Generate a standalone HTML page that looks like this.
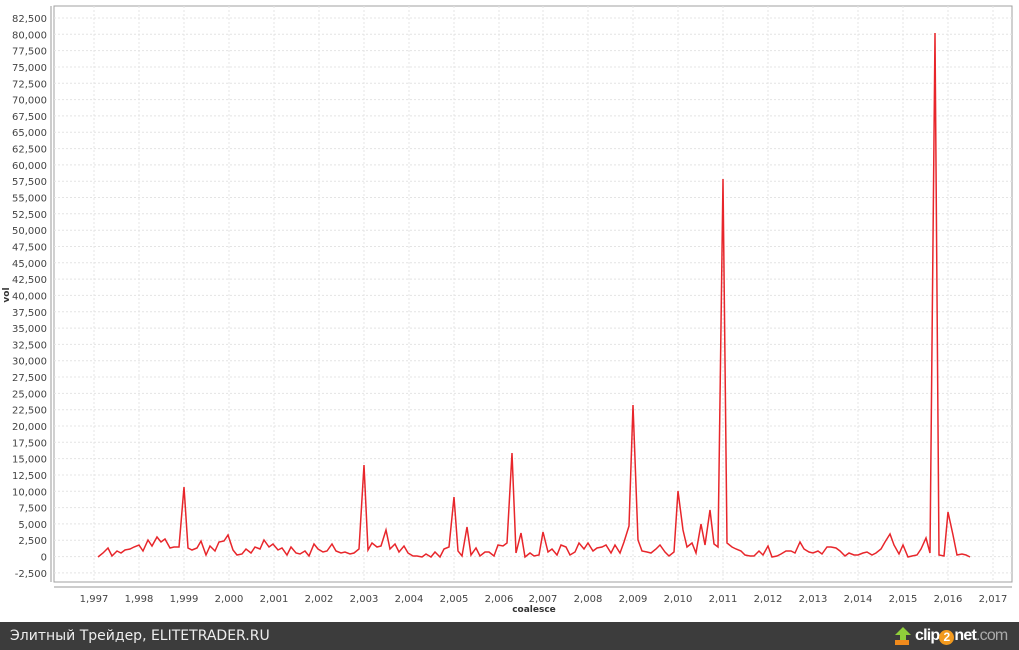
<!DOCTYPE html>
<html><head><meta charset="utf-8"><style>
html,body{margin:0;padding:0;width:1019px;height:650px;overflow:hidden;background:#fff}
svg text{font-family:"DejaVu Sans","Liberation Sans",sans-serif;font-size:10px;fill:#444}
#bar{position:absolute;left:0;top:622px;width:1019px;height:28px;background:#3c3c3c;color:#eee;font-family:"DejaVu Sans","Liberation Sans",sans-serif;font-size:14px;line-height:28px;white-space:nowrap}
</style></head><body>
<svg width="1019" height="622" style="position:absolute;left:0;top:0">
<rect x="54" y="6" width="958" height="576" fill="#fff" stroke="#a0a0a0"/>
<g stroke="#e4e4e4" stroke-dasharray="2,2">
<path d="M54 18H1012M54 34.3H1012M54 50.6H1012M54 67H1012M54 83.3H1012M54 99.6H1012M54 115.9H1012M54 132.2H1012M54 148.6H1012M54 164.9H1012M54 181.2H1012M54 197.5H1012M54 213.8H1012M54 230.2H1012M54 246.5H1012M54 262.8H1012M54 279.1H1012M54 295.4H1012M54 311.8H1012M54 328.1H1012M54 344.4H1012M54 360.7H1012M54 377H1012M54 393.4H1012M54 409.7H1012M54 426H1012M54 442.3H1012M54 458.6H1012M54 475H1012M54 491.3H1012M54 507.6H1012M54 523.9H1012M54 540.2H1012M54 556.6H1012M54 572.9H1012"/>
<path d="M94 6V582M139 6V582M184 6V582M229 6V582M274 6V582M319 6V582M364 6V582M409 6V582M454 6V582M499 6V582M543 6V582M588 6V582M633 6V582M678 6V582M723 6V582M768 6V582M813 6V582M858 6V582M903 6V582M948 6V582M993 6V582"/>
</g>
<path d="M51 6V582M54 587H1012" stroke="#999" fill="none"/>
<polyline fill="none" stroke="#e8262b" stroke-width="1.5" points="98,557 103,553 108,548 112,556 117,551 121,553 125,550 130,549 134,547 139,545 143,551 148,540 152,546 157,537 161,542 165,539 170,548 174,547 179,547 184,487 188,548 192,550 197,548 201,541 206,555 210,546 215,551 219,542 224,541 228,535 233,550 237,555 242,554 246,549 251,553 255,547 260,549 264,540 269,547 273,544 278,550 282,548 287,555 291,547 296,553 300,554 305,551 309,556 314,544 318,549 323,552 327,551 332,544 336,551 341,553 345,552 350,554 354,553 359,549 364,465 368,550 372,543 377,547 381,546 386,530 390,549 395,544 399,552 404,546 408,553 413,556 417,556 422,557 426,554 431,557 435,552 440,557 444,549 449,547 454,497 458,551 462,556 467,527 471,555 476,548 480,556 485,552 489,552 494,556 498,545 503,546 507,543 512,453 516,553 521,533 525,557 530,553 534,556 539,555 543,532 548,552 552,549 557,555 561,545 566,547 570,555 575,552 579,543 584,549 588,543 593,551 597,548 602,547 606,545 611,553 615,545 620,553 624,542 629,526 633,405 638,540 642,551 647,552 651,553 656,549 660,545 665,552 669,556 674,552 678,491 683,530 687,547 692,543 696,553 701,524 705,545 710,510 714,544 718,547 723,179 727,543 732,547 736,549 741,551 745,555 750,556 754,556 759,551 763,555 768,546 772,557 777,556 781,554 786,551 791,551 795,553 800,542 804,549 809,552 813,553 818,551 822,554 827,547 831,547 836,548 840,551 845,556 849,553 854,555 858,555 863,553 867,552 872,555 876,553 881,549 885,542 890,534 894,545 899,554 903,545 908,557 912,556 917,555 921,549 926,538 930,553 935,33 939,555 944,556 948,512 953,535 957,555 962,554 966,555 970,557"/>
<g text-anchor="end">
<text x="47" y="22">82,500</text><text x="47" y="38.3">80,000</text><text x="47" y="54.6">77,500</text><text x="47" y="71">75,000</text><text x="47" y="87.3">72,500</text><text x="47" y="103.6">70,000</text><text x="47" y="119.9">67,500</text><text x="47" y="136.2">65,000</text><text x="47" y="152.6">62,500</text><text x="47" y="168.9">60,000</text><text x="47" y="185.2">57,500</text><text x="47" y="201.5">55,000</text><text x="47" y="217.8">52,500</text><text x="47" y="234.2">50,000</text><text x="47" y="250.5">47,500</text><text x="47" y="266.8">45,000</text><text x="47" y="283.1">42,500</text><text x="47" y="299.4">40,000</text><text x="47" y="315.8">37,500</text><text x="47" y="332.1">35,000</text><text x="47" y="348.4">32,500</text><text x="47" y="364.7">30,000</text><text x="47" y="381">27,500</text><text x="47" y="397.4">25,000</text><text x="47" y="413.7">22,500</text><text x="47" y="430">20,000</text><text x="47" y="446.3">17,500</text><text x="47" y="462.6">15,000</text><text x="47" y="479">12,500</text><text x="47" y="495.3">10,000</text><text x="47" y="511.6">7,500</text><text x="47" y="527.9">5,000</text><text x="47" y="544.2">2,500</text><text x="47" y="560.6">0</text><text x="47" y="576.9">-2,500</text>
</g>
<g text-anchor="middle">
<text x="94" y="602">1,997</text><text x="139" y="602">1,998</text><text x="184" y="602">1,999</text><text x="229" y="602">2,000</text><text x="274" y="602">2,001</text><text x="319" y="602">2,002</text><text x="364" y="602">2,003</text><text x="409" y="602">2,004</text><text x="454" y="602">2,005</text><text x="499" y="602">2,006</text><text x="543" y="602">2,007</text><text x="588" y="602">2,008</text><text x="633" y="602">2,009</text><text x="678" y="602">2,010</text><text x="723" y="602">2,011</text><text x="768" y="602">2,012</text><text x="813" y="602">2,013</text><text x="858" y="602">2,014</text><text x="903" y="602">2,015</text><text x="948" y="602">2,016</text><text x="993" y="602">2,017</text>
<text x="534" y="612" style="font-weight:bold;font-size:9px;fill:#333">coalesce</text>
<text transform="translate(9,295) rotate(-90)" style="font-weight:bold;font-size:9px;fill:#333">vol</text>
</g>
</svg>
<div id="bar"><span style="position:absolute;left:10px">Элитный Трейдер, ELITETRADER.RU</span>
<svg style="position:absolute;left:893px;top:4px" width="20" height="20"><path d="M10 1L18 9H13V14H7V9H2Z" fill="#8fcf3a"/><rect x="2" y="14" width="14" height="5" fill="#f08a1c"/></svg>
<span style="position:absolute;left:915px;top:0;width:110px;font-family:'Liberation Sans',sans-serif;font-size:16px;font-weight:bold;color:#fff;letter-spacing:-0.8px">clip<span style="display:inline-block;width:15px;height:15px;border-radius:50%;background:#f39a1e;color:#fff;font-size:12px;line-height:15px;text-align:center;vertical-align:-1px;letter-spacing:0">2</span>net<span style="font-weight:normal;color:#aaa">.com</span></span>
</div>
</body></html>
